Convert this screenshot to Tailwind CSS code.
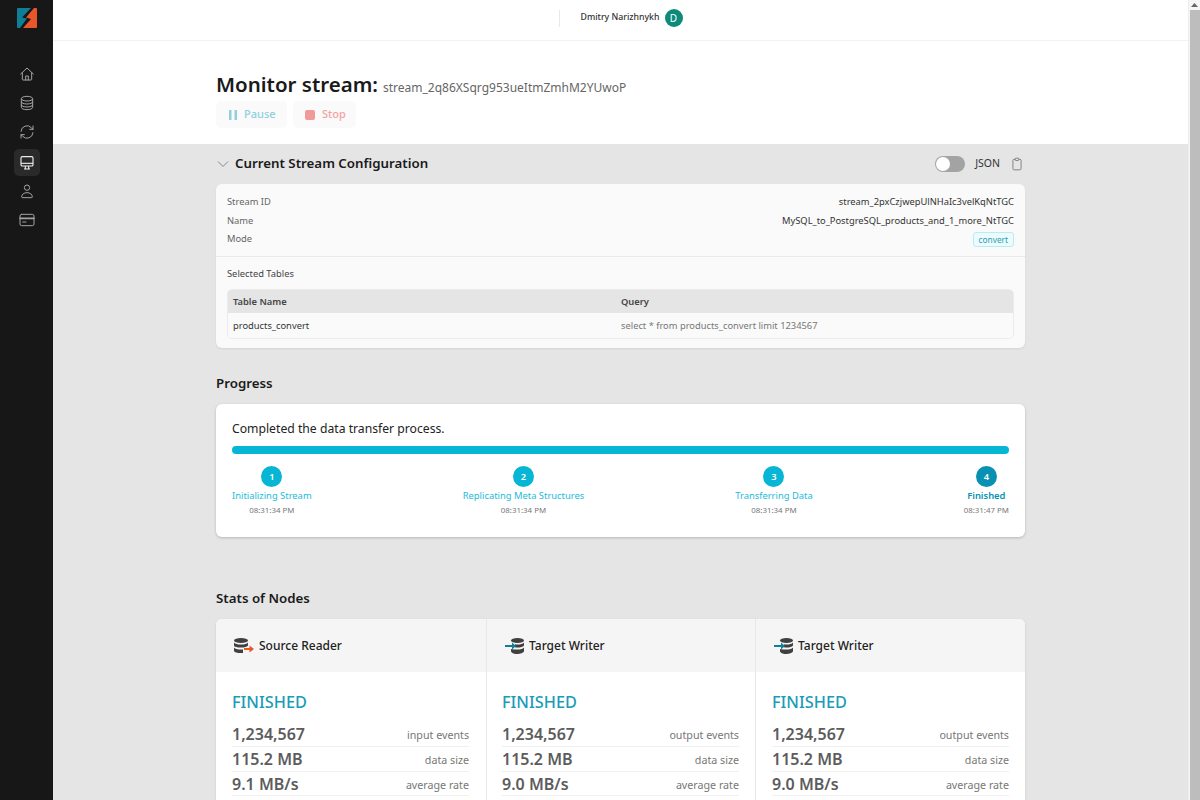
<!DOCTYPE html>
<html lang="en">
<head>
  <meta charset="UTF-8" />
  <title>Monitor stream</title>
  <script src="https://cdn.jsdelivr.net/npm/@tailwindcss/browser@4"></script>
</head>
<body class="h-screen overflow-hidden flex bg-white text-[#1a1a1a] font-['Noto_Sans',sans-serif]">

  <!-- Sidebar -->
  <aside class="w-[53px] shrink-0 bg-[#171717] flex flex-col items-center">
    <svg class="mt-[8px] w-[20px] h-[20px]" viewBox="0 0 20 20">
      <path d="M1 0H14L5 9.500 10 10.500 3 20H1Q0 20 0 19V1Q0 0 1 0Z" fill="#0f7f98"/>
      <path d="M17 0H19Q20 0 20 1V19Q20 20 19 20H6L14 11 9 9.500Z" fill="#e8562a"/>
    </svg>
    <div class="mt-[33px] flex flex-col items-center gap-[3px] text-[#a3a3a3]">
      <div class="w-[26px] h-[26px] flex items-center justify-center">
        <svg class="w-[16px] h-[16px]" viewBox="0 0 24 24" fill="none" stroke="currentColor" stroke-width="1.5" stroke-linecap="round" stroke-linejoin="round"><path d="M2.500 12 12 3l9.500 9"/><path d="M5 10v10a1 1 0 0 0 1 1h12a1 1 0 0 0 1-1V10"/><path d="M10 21v-6h4v6"/></svg>
      </div>
      <div class="w-[26px] h-[26px] flex items-center justify-center">
        <svg class="w-[16px] h-[16px]" viewBox="0 0 24 24" fill="none" stroke="currentColor" stroke-width="1.5"><ellipse cx="12" cy="5.500" rx="8.500" ry="3.500"/><path d="M3.500 5.500v13c0 2 3.800 3.500 8.500 3.500s8.500-1.500 8.500-3.500v-13"/><path d="M3.500 10c0 2 3.800 3.500 8.500 3.500s8.500-1.500 8.500-3.500"/><path d="M3.500 14.500c0 2 3.800 3.500 8.500 3.500s8.500-1.500 8.500-3.500"/></svg>
      </div>
      <div class="w-[26px] h-[26px] flex items-center justify-center">
        <svg class="w-[16px] h-[16px]" viewBox="0 0 24 24" fill="none" stroke="currentColor" stroke-width="1.500" stroke-linecap="round" stroke-linejoin="round"><path d="M3 11a9 9 0 0 1 15.500-5.500L21 8"/><path d="M21 3v5h-5"/><path d="M21 13a9 9 0 0 1-15.500 5.500L3 16"/><path d="M3 21v-5h5"/></svg>
      </div>
      <div class="mt-[1px] -mb-[1px] w-[26px] h-[27px] rounded-[5px] bg-[#2a2a2a] flex items-center justify-center text-[#ededed]">
        <svg class="w-[16px] h-[16px]" viewBox="0 0 24 24" fill="none" stroke="currentColor" stroke-width="1.700" stroke-linejoin="round"><rect x="3" y="2.500" width="18" height="14" rx="2"/><path d="M3 12.500h18"/><path d="M9.500 16.500v4.500M14.500 16.500v4.500M7.500 21h9"/></svg>
      </div>
      <div class="w-[26px] h-[26px] flex items-center justify-center">
        <svg class="w-[16px] h-[16px]" viewBox="0 0 24 24" fill="none" stroke="currentColor" stroke-width="1.500"><circle cx="12" cy="7" r="4"/><path d="M4 21c0-4 3.500-6.500 8-6.500s8 2.500 8 6.500c0 .5-.5 1-1 1H5c-.5 0-1-.5-1-1Z"/></svg>
      </div>
      <div class="w-[26px] h-[26px] flex items-center justify-center">
        <svg class="w-[16px] h-[16px]" viewBox="0 0 24 24" fill="none" stroke="currentColor" stroke-width="1.500" stroke-linecap="round"><rect x="1.500" y="3.500" width="21" height="17" rx="2.500"/><path d="M1.500 9.500h21" stroke-width="2.500"/><path d="M5.500 15h5"/></svg>
      </div>
    </div>
  </aside>

  <!-- Main -->
  <div class="flex-1 min-w-0 flex flex-col overflow-hidden">
    <header class="h-[41px] shrink-0 bg-white border-b border-[#f2f2f2] flex items-center justify-center pb-[4px]">
      <div class="h-[17px] border-l border-[#e8e8e8] mr-[21px]"></div>
      <span class="text-[8.750px] font-medium text-[#333] mr-[5px]">Dmitry Narizhnykh</span>
      <span class="w-[18px] h-[18px] rounded-full bg-[#0d8a7a] text-white text-[10px] flex items-center justify-center">D</span>
    </header>

    <section class="h-[103px] shrink-0 bg-white">
      <div class="w-[809px] mx-auto pt-[28px]">
        <div class="flex items-baseline gap-[5px] h-[30px]">
          <h1 class="text-[20.500px] font-semibold leading-[30px]">Monitor stream:</h1>
          <span class="text-[12px] text-[#666]">stream_2q86XSqrg953ueItmZmhM2YUwoP</span>
        </div>
        <div class="mt-[2px] flex gap-[6px]">
          <button class="h-[27px] w-[71px] rounded-[5px] bg-[#fafafa] flex items-center pl-[13px] gap-[7px] text-[11px] font-medium text-[#8fd0e0]">
            <svg class="w-[8px] h-[10px]" viewBox="0 0 8 10" fill="#8fd0e0"><rect x="0" y="0" width="2.500" height="10"/><rect x="5.500" y="0" width="2.500" height="10"/></svg>
            Pause
          </button>
          <button class="h-[27px] w-[63px] rounded-[5px] bg-[#fafafa] flex items-center pl-[12px] gap-[7px] text-[11px] font-medium text-[#f3a3a3]">
            <span class="w-[10px] h-[10px] rounded-[2px] bg-[#f19a9a]"></span>
            Stop
          </button>
        </div>
      </div>
    </section>

    <main class="flex-1 bg-[#e5e5e5] overflow-hidden">
      <div class="w-[809px] mx-auto">
        <!-- Config -->
        <div class="h-[40px] flex items-center">
          <svg class="w-[12px] h-[12px] ml-[1px] text-[#777]" viewBox="0 0 24 24" fill="none" stroke="currentColor" stroke-width="1.700"><path d="m2 7 10 10L22 7"/></svg>
          <h2 class="ml-[6px] text-[13.300px] font-semibold">Current Stream Configuration</h2>
          <div class="ml-auto flex items-center">
            <span class="relative w-[30px] h-[16px] rounded-full bg-[#a3a3a3]">
              <span class="absolute left-[1px] top-[1px] w-[14px] h-[14px] rounded-full bg-white"></span>
            </span>
            <span class="ml-[10px] text-[10.500px] text-[#333]">JSON</span>
            <svg class="ml-[10px] mr-[1px] w-[14px] h-[14px] text-[#777]" viewBox="0 0 24 24" fill="none" stroke="currentColor" stroke-width="1.500"><rect x="5" y="4" width="14" height="18" rx="2"/><rect x="9" y="2" width="6" height="4" rx="1" fill="#e5e5e5"/></svg>
          </div>
        </div>
        <div class="h-[164px] rounded-[6px] bg-[#fafafa] shadow-[0_1px_2px_rgba(0,0,0,0.08)] text-[9.330px]">
          <div class="h-[73px] px-[11px] pt-[8px] border-b border-[#e9e9e9]">
            <div class="h-[19px] flex items-center justify-between"><span class="text-[#666]">Stream ID</span><span class="text-[#333]">stream_2pxCzjwepUlNHaIc3velKqNtTGC</span></div>
            <div class="h-[19px] flex items-center justify-between"><span class="text-[#666]">Name</span><span class="text-[#333]">MySQL_to_PostgreSQL_products_and_1_more_NtTGC</span></div>
            <div class="h-[19px] flex items-center justify-between"><span class="text-[#666] -mt-[1px]">Mode</span><span class="h-[15px] px-[5px] rounded-[3px] border border-[#b8ecf4] bg-[#ecfbfd] text-[#2a9fb5] text-[8.300px] leading-[13px]">convert</span></div>
          </div>
          <div class="px-[11px]">
            <div class="h-[33px] flex items-center text-[#444]">Selected Tables</div>
            <div class="-mt-[1px] rounded-[5px] border border-[#ececec] overflow-hidden">
              <div class="h-[23px] bg-[#e5e5e5] flex items-center font-semibold text-[#444]"><span class="w-[387px] pl-[5px]">Table Name</span><span class="pl-[6px]">Query</span></div>
              <div class="h-[25px] bg-[#fafafa] flex items-center"><span class="w-[387px] pl-[5px] text-[#333]">products_convert</span><span class="pl-[6px] text-[#777]">select * from products_convert limit 1234567</span></div>
            </div>
          </div>
        </div>

        <!-- Progress -->
        <h2 class="mt-[25px] text-[13.300px] font-semibold leading-[20px]">Progress</h2>
        <div class="mt-[11px] h-[133px] rounded-[6px] bg-white shadow-[0_1px_3px_rgba(0,0,0,0.2)] px-[16px] pt-[15px]">
          <p class="text-[12.200px] leading-[20px] text-[#222]">Completed the data transfer process.</p>
          <div class="mt-[7px] h-[8px] rounded-full bg-[#06b6d4]"></div>
          <div class="mt-[12px] flex justify-between text-center">
            <div class="flex flex-col items-center">
              <span class="w-[21px] h-[21px] rounded-full bg-[#06b6d4] text-white text-[9.330px] font-semibold flex items-center justify-center">1</span>
              <span class="mt-[2px] text-[9.400px] leading-[14px] text-[#1cbcd9]">Initializing Stream</span>
              <span class="mt-[1px] text-[7.900px] leading-[12px] text-[#777]">08:31:34 PM</span>
            </div>
            <div class="flex flex-col items-center">
              <span class="w-[21px] h-[21px] rounded-full bg-[#06b6d4] text-white text-[9.330px] font-semibold flex items-center justify-center">2</span>
              <span class="mt-[2px] text-[9.400px] leading-[14px] text-[#1cbcd9]">Replicating Meta Structures</span>
              <span class="mt-[1px] text-[7.900px] leading-[12px] text-[#777]">08:31:34 PM</span>
            </div>
            <div class="flex flex-col items-center">
              <span class="w-[21px] h-[21px] rounded-full bg-[#06b6d4] text-white text-[9.330px] font-semibold flex items-center justify-center">3</span>
              <span class="mt-[2px] text-[9.400px] leading-[14px] text-[#1cbcd9]">Transferring Data</span>
              <span class="mt-[1px] text-[7.900px] leading-[12px] text-[#777]">08:31:34 PM</span>
            </div>
            <div class="flex flex-col items-center">
              <span class="w-[21px] h-[21px] rounded-full bg-[#0891b2] text-white text-[9.330px] font-semibold flex items-center justify-center">4</span>
              <span class="mt-[2px] text-[9.400px] leading-[14px] font-semibold text-[#0891b2]">Finished</span>
              <span class="mt-[1px] text-[7.900px] leading-[12px] text-[#777]">08:31:47 PM</span>
            </div>
          </div>
        </div>

        <!-- Stats -->
        <h2 class="mt-[51px] text-[13.300px] font-semibold leading-[20px]">Stats of Nodes</h2>
        <div class="mt-[11px] h-[320px] rounded-t-[6px] bg-white overflow-hidden grid grid-cols-[271px_269px_269px] shadow-[0_1px_3px_rgba(0,0,0,0.1)]">
          <div class="border-r border-[#e8e8e8]">
            <div class="h-[53px] bg-[#f5f5f5] flex items-center pl-[18px]">
              <svg class="w-[20px] h-[16px]" viewBox="0 0 20 16">
                <ellipse cx="7" cy="2.500" rx="7" ry="2.500" fill="#404040"/>
                <path d="M0 4.500c1 1.500 3.500 2 7 2s6-.5 7-2v3c-1 1.500-3.500 2-7 2s-7-.5-7-2Z" fill="#404040"/>
                <path d="M0 9.500c1 1.500 3.500 2 7 2h2v3.500H7c-3.500 0-7-.5-7-2.500Z" fill="#404040"/>
                <path d="M10 11h7" stroke="#e8562a" stroke-width="2.200"/>
                <path d="M15.500 7.500 20 11 15.500 14.500Z" fill="#e8562a"/>
              </svg>
              <span class="ml-[5px] text-[12px] font-medium text-[#222]">Source Reader</span>
            </div>
            <div class="pl-[16px] pr-[17px] pt-[18px]">
              <div class="text-[16.300px] leading-[24px] font-medium text-[#1a9cb8]">FINISHED</div>
              <div class="mt-[8px] h-[25px] border-b border-[#f0f0f0] flex items-center justify-between"><span class="text-[16px] font-semibold text-[#5c5c5c]">1,234,567</span><span class="text-[10.700px] text-[#777] mt-[3px]">input events</span></div>
              <div class="h-[25px] border-b border-[#f0f0f0] flex items-center justify-between"><span class="text-[16px] font-semibold text-[#5c5c5c]">115.2 MB</span><span class="text-[10.700px] text-[#777] mt-[3px]">data size</span></div>
              <div class="h-[24px] border-b border-[#f0f0f0] flex items-center justify-between"><span class="text-[16px] font-semibold text-[#5c5c5c]">9.1 MB/s</span><span class="text-[10.700px] text-[#777] mt-[3px]">average rate</span></div>
            </div>
          </div>
          <div class="border-r border-[#e8e8e8]">
            <div class="h-[53px] bg-[#f5f5f5] flex items-center pl-[18px]">
              <svg class="w-[19px] h-[16px]" viewBox="0 0 19 16">
                <ellipse cx="12.500" cy="2.500" rx="6.500" ry="2.500" fill="#404040"/>
                <path d="M10 6.200c.8.200 1.600.3 2.500.3 3 0 5.500-.5 6.500-2v3c-1 1.500-3.500 2-6.500 2-.9 0-1.700-.1-2.500-.3Z" fill="#404040"/>
                <path d="M6 11c2 .5 4 .5 6.500.5 3 0 5.500-.5 6.500-2v4c-1 1.500-3.500 2.500-6.500 2.500S7 15.500 6 13.500Z" fill="#404040"/>
                <path d="M0 8h8" stroke="#0f7f98" stroke-width="2.200"/>
                <path d="M7 4.500 11 8 7 11.500Z" fill="#0f7f98"/>
              </svg>
              <span class="ml-[5px] text-[12px] font-medium text-[#222]">Target Writer</span>
            </div>
            <div class="pl-[15px] pr-[16px] pt-[18px]">
              <div class="text-[16.300px] leading-[24px] font-medium text-[#1a9cb8]">FINISHED</div>
              <div class="mt-[8px] h-[25px] border-b border-[#f0f0f0] flex items-center justify-between"><span class="text-[16px] font-semibold text-[#5c5c5c]">1,234,567</span><span class="text-[10.700px] text-[#777] mt-[3px]">output events</span></div>
              <div class="h-[25px] border-b border-[#f0f0f0] flex items-center justify-between"><span class="text-[16px] font-semibold text-[#5c5c5c]">115.2 MB</span><span class="text-[10.700px] text-[#777] mt-[3px]">data size</span></div>
              <div class="h-[24px] border-b border-[#f0f0f0] flex items-center justify-between"><span class="text-[16px] font-semibold text-[#5c5c5c]">9.0 MB/s</span><span class="text-[10.700px] text-[#777] mt-[3px]">average rate</span></div>
            </div>
          </div>
          <div>
            <div class="h-[53px] bg-[#f5f5f5] flex items-center pl-[18px]">
              <svg class="w-[19px] h-[16px]" viewBox="0 0 19 16">
                <ellipse cx="12.500" cy="2.500" rx="6.500" ry="2.500" fill="#404040"/>
                <path d="M10 6.200c.8.200 1.600.3 2.500.3 3 0 5.500-.5 6.500-2v3c-1 1.500-3.500 2-6.500 2-.9 0-1.700-.1-2.500-.3Z" fill="#404040"/>
                <path d="M6 11c2 .5 4 .5 6.500.5 3 0 5.500-.5 6.500-2v4c-1 1.500-3.500 2.500-6.500 2.500S7 15.500 6 13.500Z" fill="#404040"/>
                <path d="M0 8h8" stroke="#0f7f98" stroke-width="2.200"/>
                <path d="M7 4.500 11 8 7 11.500Z" fill="#0f7f98"/>
              </svg>
              <span class="ml-[5px] text-[12px] font-medium text-[#222]">Target Writer</span>
            </div>
            <div class="px-[16px] pt-[18px]">
              <div class="text-[16.300px] leading-[24px] font-medium text-[#1a9cb8]">FINISHED</div>
              <div class="mt-[8px] h-[25px] border-b border-[#f0f0f0] flex items-center justify-between"><span class="text-[16px] font-semibold text-[#5c5c5c]">1,234,567</span><span class="text-[10.700px] text-[#777] mt-[3px]">output events</span></div>
              <div class="h-[25px] border-b border-[#f0f0f0] flex items-center justify-between"><span class="text-[16px] font-semibold text-[#5c5c5c]">115.2 MB</span><span class="text-[10.700px] text-[#777] mt-[3px]">data size</span></div>
              <div class="h-[24px] border-b border-[#f0f0f0] flex items-center justify-between"><span class="text-[16px] font-semibold text-[#5c5c5c]">9.0 MB/s</span><span class="text-[10.700px] text-[#777] mt-[3px]">average rate</span></div>
            </div>
          </div>
        </div>
      </div>
    </main>
  </div>

  <!-- Scrollbar -->
  <div class="w-[12px] shrink-0 bg-[#f5f5f5] flex flex-col items-center border-l border-[#eee]">
    <svg class="mt-[3px] w-[7px] h-[4px]" viewBox="0 0 7 4" fill="#666"><path d="M3.500 0 7 4H0Z"/></svg>
    <div class="mt-[3px] w-[10px] flex-1 bg-[#bdbdbd]"></div>
  </div>
</body>
</html>
